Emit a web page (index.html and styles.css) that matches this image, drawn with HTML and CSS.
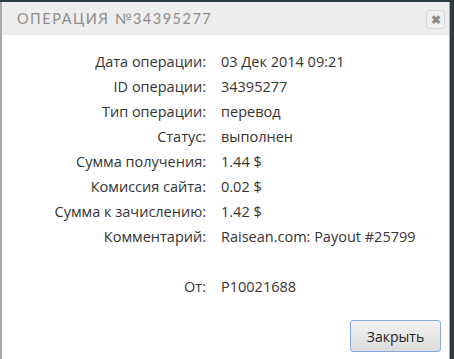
FILE: index.html
```html
<!DOCTYPE html>
<html>
<head>
    <title>Операция №34395277</title>
    <meta charset="UTF-8">
    <link rel="stylesheet" href="styles.css">
</head>
<body>
<div class="dialog">
    <div class="dialog-head">
        <span class="dialog-title">Операция №34395277</span>
        <span class="close-btn">&#10006;</span>
    </div>

    <div class="details">
        <div class="label">Дата операции:</div><div class="value">03 Дек 2014 09:21</div>
        <div class="label">ID операции:</div><div class="value">34395277</div>
        <div class="label">Тип операции:</div><div class="value">перевод</div>
        <div class="label">Статус:</div><div class="value">выполнен</div>
        <div class="label">Сумма получения:</div><div class="value">1.44 $</div>
        <div class="label">Комиссия сайта:</div><div class="value">0.02 $</div>
        <div class="label">Сумма к зачислению:</div><div class="value">1.42 $</div>
        <div class="label">Комментарий:</div><div class="value">Raisean.com: Payout #25799</div>
        <div class="label"></div><div class="value"></div>
        <div class="label">От:</div><div class="value">P10021688</div>
    </div>

    <div class="dialog-foot">
        <button class="btn">Закрыть</button>
    </div>
</div>
</body>
</html>
```

FILE: styles.css
```css
html, body {
    height: 100%;
}
body {
    margin: 0;
    padding: 2px 4px 0 0;
    box-sizing: border-box;
    background-color: #2e3b41;
    font-family: "Open Sans", sans-serif;
}
.dialog {
    height: 100%;
    background-color: #fff;
    border-left: 2px solid #a8a8a8;
    border-right: 1px solid #a8a8a8;
    display: flex;
    flex-direction: column;
}
.dialog-head {
    height: 33px;
    background-color: #eeeeee;
    display: flex;
    align-items: center;
    justify-content: space-between;
    padding: 0 4px 0 15px;
}
.dialog-title {
    font-family: Lato, sans-serif;
    font-size: 14.5px;
    text-transform: uppercase;
    letter-spacing: 1.5px;
    color: #8c8c8c;
}
.close-btn {
    width: 17px;
    height: 17px;
    border: 1px solid #d6d6d6;
    border-radius: 3px;
    background-color: #f0f0f0;
    color: #8a8a8a;
    font-size: 12px;
    font-weight: bold;
    line-height: 17px;
    text-align: center;
    margin-top: 2px;
}
.details {
    display: grid;
    grid-template-columns: 204px 1fr;
    column-gap: 15px;
    padding-top: 14px;
    font-size: 14.5px;
    line-height: 25px;
    color: #333;
}
.label {
    text-align: right;
    height: 25px;
    white-space: nowrap;
}
.value {
    color: #3a3330;
    height: 25px;
    white-space: nowrap;
}
.dialog-foot {
    margin-top: auto;
    display: flex;
    justify-content: flex-end;
    padding: 0 8px 7px 0;
}
.btn {
    width: 91px;
    height: 32px;
    font-family: "Open Sans", sans-serif;
    font-size: 14px;
    color: #222;
    border: 1px solid #86a9e3;
    border-radius: 3px;
    background: linear-gradient(#f2f2f2, #e8e8e8 50%, #dcdcdc);
    cursor: pointer;
}
```
